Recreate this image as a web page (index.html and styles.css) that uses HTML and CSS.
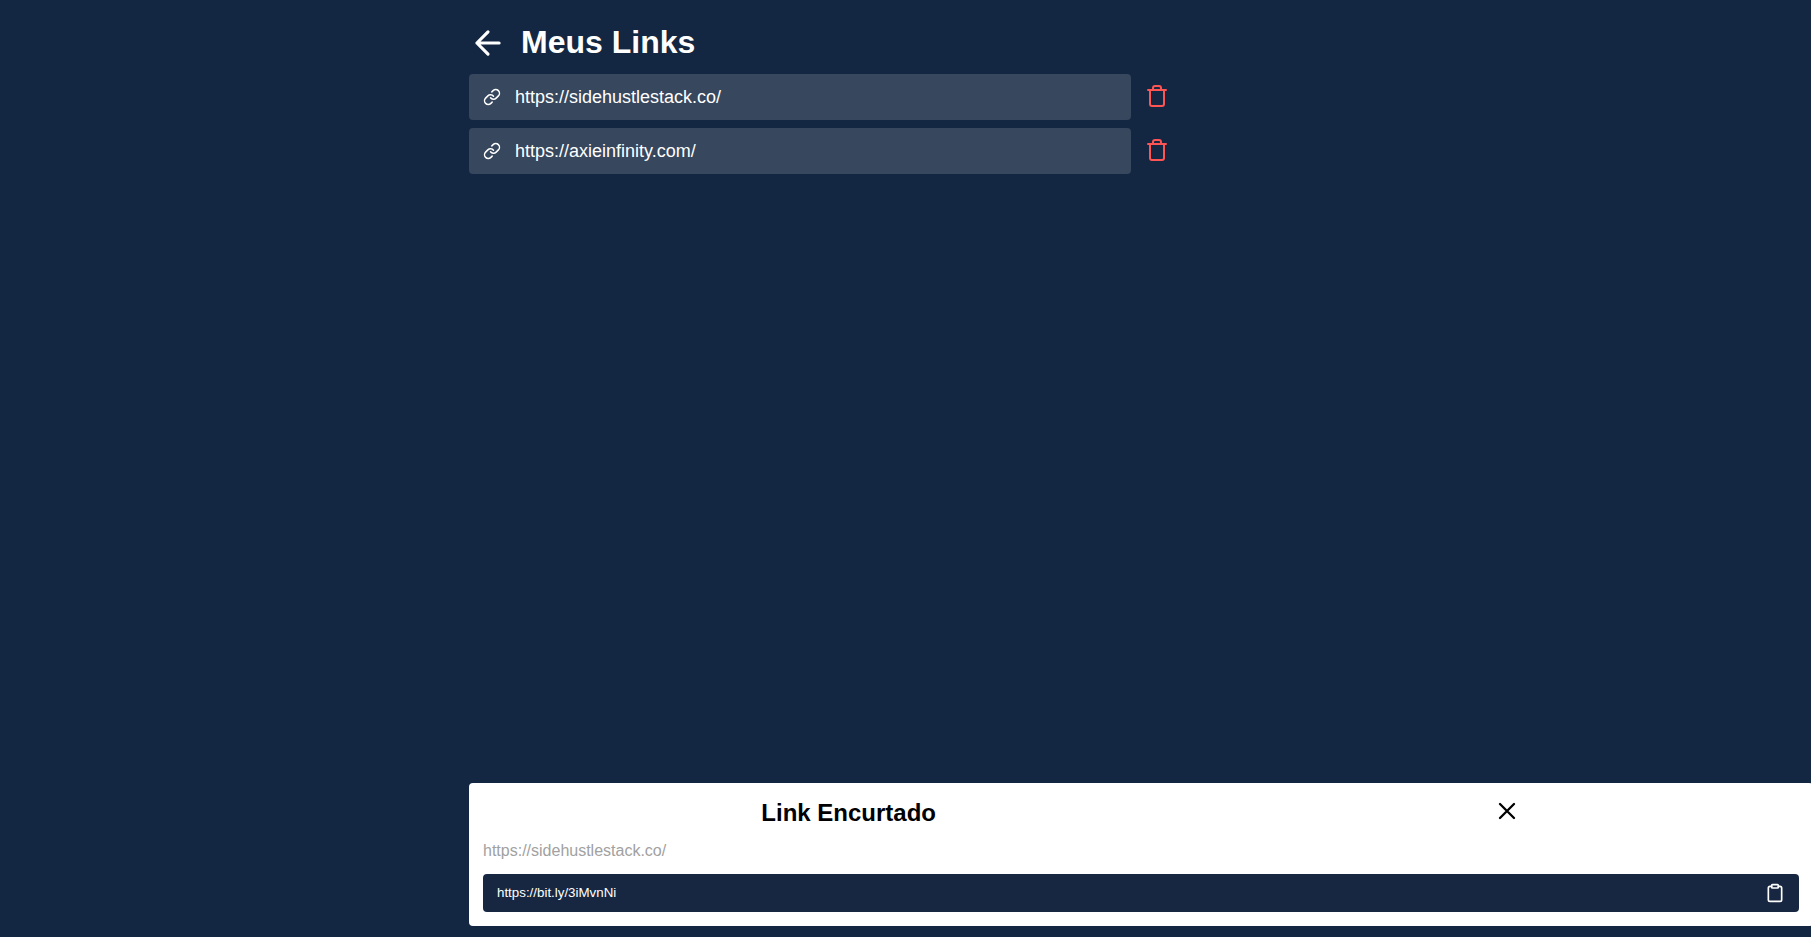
FILE: index.html
```html
<!DOCTYPE html>
<html lang="pt-BR">
<head>
<meta charset="utf-8">
<meta name="viewport" content="width=device-width, initial-scale=1">
<title>Meus Links</title>
<link rel="stylesheet" href="styles.css">
</head>
<body>
<div class="page">
  <main class="links">
    <header class="links-header">
      <a class="back" href="#" aria-label="Voltar">
        <svg class="icon" width="38" height="38" viewBox="0 0 24 24"><path d="M19 12H5M12 19l-7-7 7-7"/></svg>
      </a>
      <h1>Meus Links</h1>
    </header>
    <ul class="link-list">
      <li class="link-row">
        <button class="link" type="button">
          <svg class="icon" width="18" height="18" viewBox="0 0 24 24"><path d="M10 13a5 5 0 0 0 7.54.54l3-3a5 5 0 0 0-7.07-7.07l-1.72 1.71"/><path d="M14 11a5 5 0 0 0-7.54-.54l-3 3a5 5 0 0 0 7.07 7.07l1.71-1.71"/></svg>
          https://sidehustlestack.co/
        </button>
        <button class="delete" type="button" aria-label="Excluir">
          <svg class="icon" width="24" height="24" viewBox="0 0 24 24"><path d="M3 6h18M19 6v14a2 2 0 0 1-2 2H7a2 2 0 0 1-2-2V6m3 0V4a2 2 0 0 1 2-2h4a2 2 0 0 1 2 2v2"/></svg>
        </button>
      </li>
      <li class="link-row">
        <button class="link" type="button">
          <svg class="icon" width="18" height="18" viewBox="0 0 24 24"><path d="M10 13a5 5 0 0 0 7.54.54l3-3a5 5 0 0 0-7.07-7.07l-1.72 1.71"/><path d="M14 11a5 5 0 0 0-7.54-.54l-3 3a5 5 0 0 0 7.07 7.07l1.71-1.71"/></svg>
          https://axieinfinity.com/
        </button>
        <button class="delete" type="button" aria-label="Excluir">
          <svg class="icon" width="24" height="24" viewBox="0 0 24 24"><path d="M3 6h18M19 6v14a2 2 0 0 1-2 2H7a2 2 0 0 1-2-2V6m3 0V4a2 2 0 0 1 2-2h4a2 2 0 0 1 2 2v2"/></svg>
        </button>
      </li>
    </ul>
  </main>
  <section class="panel" aria-labelledby="panel-title">
    <div class="panel-header">
      <h2 id="panel-title">Link Encurtado</h2>
      <button class="close" type="button" aria-label="Fechar">
        <svg class="icon" width="28" height="28" viewBox="0 0 24 24"><path d="M18 6L6 18M6 6l12 12"/></svg>
      </button>
    </div>
    <p class="long-url">https://sidehustlestack.co/</p>
    <button class="short-url" type="button">
      https://bit.ly/3iMvnNi
      <svg class="icon" width="20" height="20" viewBox="0 0 24 24"><path d="M16 4h2a2 2 0 0 1 2 2v14a2 2 0 0 1-2 2H6a2 2 0 0 1-2-2V6a2 2 0 0 1 2-2h2"/><rect x="8" y="2" width="8" height="4" rx="1"/></svg>
    </button>
  </section>
</div>
</body>
</html>
```

FILE: styles.css
```css
* {
  box-sizing: border-box;
  margin: 0;
  padding: 0;
}

body {
  background: #132742;
  color: #fff;
  font-family: "Liberation Sans", Arial, sans-serif;
  font-size: 16px;
  overflow-x: hidden;
}

button {
  background: transparent;
  border: 0;
  color: inherit;
  cursor: pointer;
  font-family: inherit;
}

.icon {
  display: block;
  flex: none;
  fill: none;
  stroke: currentColor;
  stroke-width: 2;
  stroke-linecap: round;
  stroke-linejoin: round;
}

.page {
  display: grid;
  grid-template-columns: 1fr minmax(0, 873px) 1fr;
  grid-template-rows: 1fr auto;
  min-height: 100vh;
  padding-bottom: 11px;
}

.links {
  grid-column: 2;
  padding-top: 24px;
}

.links-header {
  display: flex;
  align-items: flex-start;
  gap: 14px;
  margin-bottom: 12px;
}

.back {
  color: inherit;
}

h1 {
  font-size: 32px;
  line-height: 36px;
}

.link-list {
  display: flex;
  flex-direction: column;
  gap: 8px;
  list-style: none;
  max-width: 700px;
}

.link-row {
  display: flex;
  align-items: flex-start;
  gap: 14px;
}

.link {
  display: flex;
  flex: 1;
  align-items: center;
  gap: 14px;
  padding: 13px 14px;
  border-radius: 4px;
  background: rgba(255, 255, 255, 0.15);
  font-size: 18px;
  line-height: 20px;
  text-align: left;
}

.delete {
  padding: 10px 0;
  color: #ff5454;
}

.panel {
  grid-column: 2 / 4;
  margin-right: -2px;
  padding: 14px;
  border-radius: 4px;
  background: #fff;
  color: #000;
}

.panel-header {
  display: flex;
  align-items: flex-start;
  justify-content: space-around;
}

h2 {
  font-size: 24px;
  line-height: 32px;
}

.long-url {
  margin: 11px 0 13px;
  color: #a1a1a1;
  line-height: 21px;
}

.short-url {
  display: flex;
  align-items: center;
  justify-content: space-between;
  width: 100%;
  padding: 9px 14px;
  border-radius: 4px;
  background: #172742;
  color: #fff;
  line-height: 20px;
}
```
